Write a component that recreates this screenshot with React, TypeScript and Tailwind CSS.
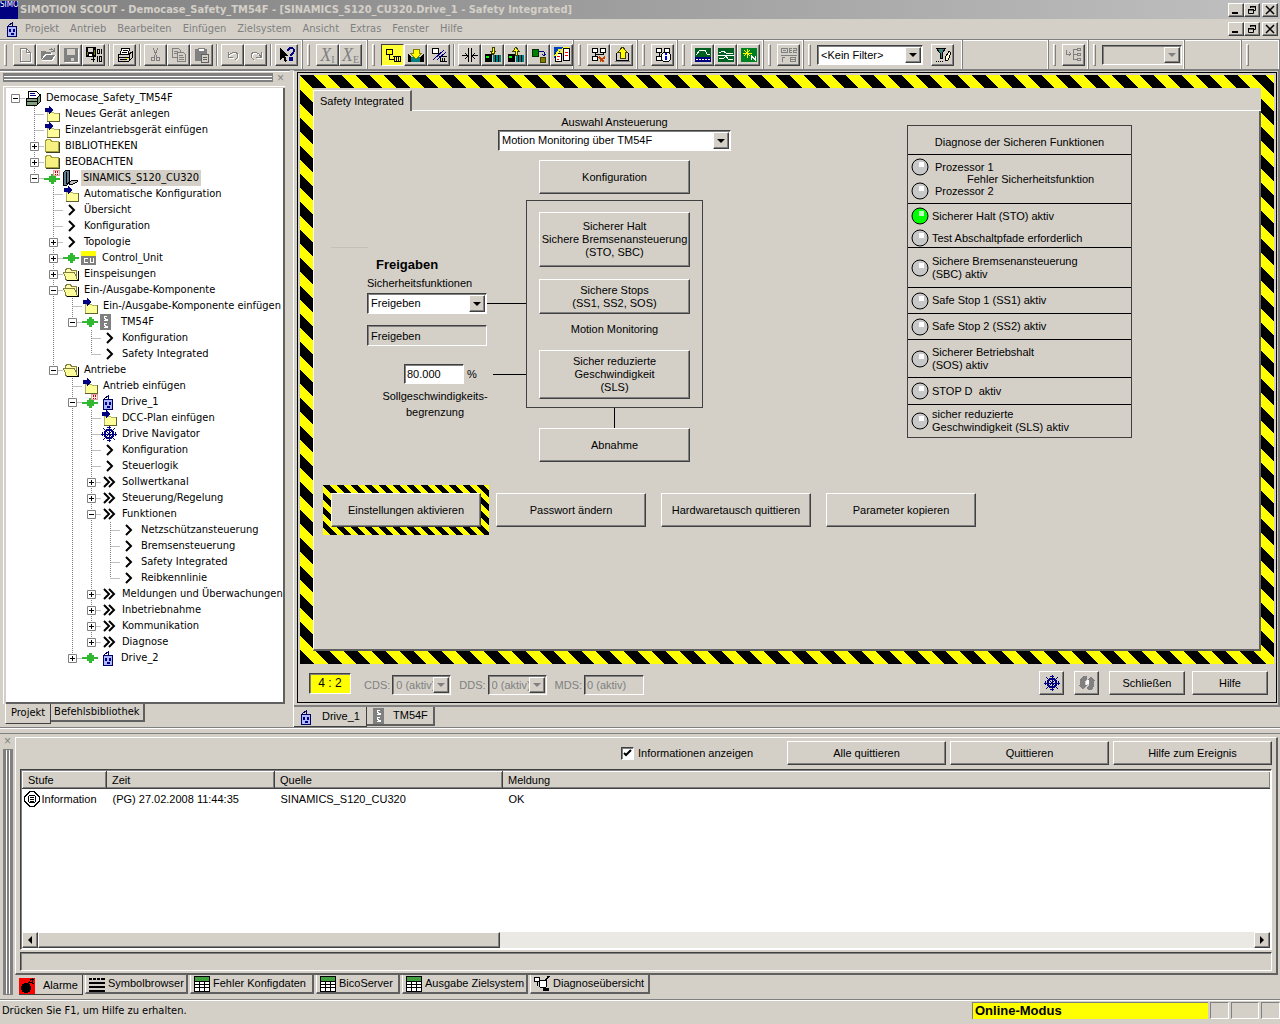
import type { ReactNode } from "react";
import clsx from "clsx";

const raised =
  "border border-t-white border-l-white border-r-[#404040] border-b-[#404040] shadow-[inset_-1px_-1px_0_#808080]";
const sunken =
  "border border-t-[#404040] border-l-[#404040] border-r-white border-b-white shadow-[inset_1px_1px_0_#808080]";
const hazard =
  "bg-[linear-gradient(45deg,#000_25%,#ff0_25%,#ff0_50%,#000_50%,#000_75%,#ff0_75%)]";
const tahoma = "font-['DejaVu_Sans_Condensed','DejaVu_Sans',sans-serif]";

const icons: Record<string, ReactNode> = {
  neu: (
    <g fill="none">
      <path d="M3.500 1.500h6l4 4v9h-10z M9.500 1.500v4h4" stroke="#fff" transform="translate(1 1)" />
      <path d="M3.500 1.500h6l4 4v9h-10z M9.500 1.500v4h4" stroke="#808080" />
    </g>
  ),
  open: (
    <>
      <path d="M2 5h4l1 1h5v2h4l-3 6H2z" fill="#fff" />
      <path d="M1 4h4l1 1h5v2H5l-4 6zM2 13l4-5h9l-3 5z" fill="#808080" />
      <path d="M9 3c2-2 3-1 5 1M14 1v3h-3" stroke="#808080" fill="none" />
    </>
  ),
  save: (
    <>
      <path d="M2 2h14v14H2z" fill="#fff" />
      <path d="M1 1h14v14H1z" fill="#808080" />
      <path d="M4 2h8v6H4zM8 11h3v3H8z" fill="#d4d0c8" />
    </>
  ),
  saveAll: (
    <>
      <path d="M0 0h10v10H0z" fill="#000" />
      <path d="M2 1h5v4H2z" fill="#d4d0c8" />
      <path d="M1 5h1v3H1zM8 3h1v5H8z" fill="#808000" />
      <path d="M3 7h3v2H3z" fill="#fff" />
      <path d="M11.500 2.500h2v4h-2zM15.500 2v5M5 12.500h4M7.500 10v5M11.500 9v6M13.500 9.500h2v5h-2z" stroke="#000" fill="none" />
    </>
  ),
  print: (
    <>
      <path d="M5 1h8l-2 6H3z" fill="#fff" stroke="#000" />
      <path d="M6 3.500h5M5 5.500h5" stroke="#000" />
      <path d="M1 7h11l3-2v6l-3 3H1z" fill="#d4d0c8" stroke="#000" />
      <path d="M1 10.500h11M12.500 7v7M3 12.500h7" stroke="#000" />
      <path d="M9 11h2v1H9z" fill="#ff0" />
    </>
  ),
  cut: (
    <g fill="none" stroke="#808080">
      <path d="M5 1l4 9M10 1l-4 9" />
      <circle cx="5" cy="12" r="2" />
      <circle cx="10" cy="12" r="2" />
    </g>
  ),
  copy: (
    <g fill="#d4d0c8" stroke="#808080">
      <path d="M1.500 1.500h6l2 2v7h-8zM3 4.500h4M3 6.500h4" />
      <path d="M6.500 5.500h6l2 2v7h-8zM8 8.500h4M8 10.500h5M8 12.500h5" />
    </g>
  ),
  paste: (
    <>
      <path d="M1 2h12v12H1z" fill="#808080" />
      <path d="M4 1h6v3H4z" fill="#fff" stroke="#808080" />
      <path d="M7.500 7.500h7v8h-7zM9 10.500h4M9 12.500h4" fill="#d4d0c8" stroke="#606060" />
    </>
  ),
  undo: (
    <g fill="none">
      <path d="M3 5v5h5M3 10c3-6 10-6 10-1 0 2-2 3-3 4" stroke="#fff" transform="translate(1 1)" />
      <path d="M3 5v5h5M3 10c3-6 10-6 10-1 0 2-2 3-3 4" stroke="#808080" />
    </g>
  ),
  redo: (
    <g fill="none">
      <path d="M13 5v5H8M13 10C10 4 3 4 3 9c0 2 2 3 3 4" stroke="#fff" transform="translate(1 1)" />
      <path d="M13 5v5H8M13 10C10 4 3 4 3 9c0 2 2 3 3 4" stroke="#808080" />
    </g>
  ),
  help: (
    <>
      <path d="M1 1v12l3-3 2 5 2-1-2-5h4z" fill="#000" />
      <path d="M9 4c0-4 6-4 6 0 0 2-3 2-3 5M11 11h2v2h-2z" fill="none" stroke="#000080" strokeWidth="2" />
    </>
  ),
  online: (
    <>
      <path d="M1.500 2.500h6v5h-6z" fill="#ff0" stroke="#000" />
      <path d="M4.500 8v4.500h4M8 9.500h8M9.500 10v5M11.500 10v5M13.500 10v5M15.500 10v5M9 14.500h7" stroke="#000" fill="none" />
    </>
  ),
  offline: (
    <>
      <path d="M1.500 1.500h6v5h-6z" fill="#fff" stroke="#000" />
      <path d="M8 9.500h8M9.500 11v4M11.500 11v4M13.500 11v4M9 14.500h7" stroke="#000" fill="none" />
      <path d="M2 13L13 3M6 13l9-8" stroke="#000080" fill="none" />
    </>
  ),
  load: (
    <>
      <path d="M0 7l3 3v5H0zM16 7l-4 3v5h4z" fill="#000" />
      <path d="M3 10h9v5H3z" fill="#008080" />
      <path d="M5 2h6v4h3l-6 6-6-6h3z" fill="#ff0" stroke="#808000" />
    </>
  ),
  split: (
    <>
      <path d="M6.500 1v14M9.500 1v14" stroke="#000" fill="none" />
      <path d="M0 8.500h5M3 6l3 3-3 3M16 8.500h-5M13 6l-3 3 3 3" stroke="#000" fill="none" />
    </>
  ),
  download: (
    <>
      <path d="M0 7h7v8H0z" fill="#000" />
      <path d="M1 9h3v2H1z" fill="#0f0" />
      <path d="M8 8h8v7H8z" fill="#008080" />
      <path d="M10.500 8v7M13.500 8v7" stroke="#000" />
      <path d="M7 0h2v4h2L8 8 5 4h2z" fill="#ff0" stroke="#404000" />
    </>
  ),
  upload: (
    <>
      <path d="M0 7h7v8H0z" fill="#000" />
      <path d="M1 9h3v2H1z" fill="#0f0" />
      <path d="M8 8h8v7H8z" fill="#008080" />
      <path d="M10.500 8v7M13.500 8v7" stroke="#000" />
      <path d="M8 0l3 4H9v4H7V4H5z" fill="#ff0" stroke="#404000" />
    </>
  ),
  ram: (
    <>
      <path d="M1 2h6v7H1z" fill="#008000" stroke="#003000" />
      <path d="M8 4l5 1M13 5v4M11 7l2 2 2-2" stroke="#000080" fill="none" />
      <circle cx="12" cy="13" r="3" fill="#808000" stroke="#404000" />
    </>
  ),
  compare: (
    <>
      <path d="M0 0h9L0 12z" fill="#0040c0" />
      <path d="M9 0h6L6 9z" fill="#ff0" />
      <path d="M1.500 6.500h6v8h-6zM9.500 1.500h6v12h-6z" fill="#fff" stroke="#000" />
      <path d="M11 5.500h3M11 8.500h3M3 9.500h3M3 12.500h2" stroke="#f00" />
      <path d="M1 9L6 2" stroke="#ff0" strokeWidth="2" />
    </>
  ),
  nodes: (
    <>
      <path d="M1.500 1.500h5v4h-5zM9.500 1.500h5v4h-5zM1.500 9.500h5v4h-5z" fill="#fff" stroke="#000" />
      <path d="M4.500 6v3M12.500 6v2M4 7.500h8" stroke="#000" />
      <path d="M8 10l5 5M9 14l5-4" stroke="#c04000" strokeWidth="2" />
    </>
  ),
  eject: (
    <>
      <path d="M2.500 6v7.500h12V6" fill="none" stroke="#000" />
      <path d="M1 14h15v1H1z" fill="#808080" />
      <path d="M8.500 0L13 5h-2v6H6V5H4z" fill="#ff0" stroke="#404000" />
    </>
  ),
  info: (
    <>
      <path d="M1.500 1.500h5v4h-5zM9.500 1.500h5v4h-5zM1.500 9.500h5v4h-5zM4.500 6v3" fill="#fff" stroke="#000" />
      <circle cx="11" cy="10" r="5" fill="#fff" stroke="#000" />
      <path d="M10 6h2v2h-2zM10 9h2v4h-2z" fill="#00f" />
    </>
  ),
  trace: (
    <>
      <path d="M0 1h16v9H0z" fill="#006020" />
      <path d="M0 10h16v5H0z" fill="#000080" />
      <path d="M1 8l4-5h5l2 4h3" stroke="#fff" fill="none" />
      <path d="M1 12.500h14" stroke="#fff" strokeDasharray="2 1" />
    </>
  ),
  trace2: (
    <>
      <path d="M0 1h16v14H0z" fill="#006020" />
      <path d="M1 6l4-2 3 2h7M1 11h5l2-2 3 4 4-1M0 8.500h16" stroke="#fff" fill="none" />
    </>
  ),
  trace3: (
    <>
      <path d="M0 1h16v14H0z" fill="#008020" />
      <path d="M6.500 2v9M2 6.500h9M3 3l6 6M9 3l-6 6" stroke="#ff0" />
      <path d="M10.500 13V9l4 4V9" stroke="#fff" fill="none" />
    </>
  ),
  e2: (
    <g stroke="#808080" fill="none">
      <path d="M.5 1.500h6v4h-6zM2 3.500h3M11 1.500H8.500v4H11M9 3.500h2M12 1.500h3.500v2h-3v2h3" />
      <path d="M0 8.500h16M1.500 10v5M1 10.500h3M9.500 10.500h5v4h-5zM9 12.500h5" />
    </g>
  ),
  filter: (
    <>
      <path d="M1 1h10L7 6v5H5V6z" fill="#408080" stroke="#000" />
      <path d="M14 4l-4 7v3l3-1 3-7z" fill="#ffc" stroke="#000" />
      <path d="M1 14.500h8" stroke="#000" strokeDasharray="1 1" />
    </>
  ),
  hierarchy: (
    <g stroke="#808080" fill="none">
      <path d="M.5 3v4.500h4M3 5l2 2-2 2M7.500 2v11M8 2.500h3M8 7.500h3M8 12.500h3" />
      <path d="M11.500 1.500h3v2h-3zM11.500 6.500h3v2h-3zM11.500 11.500h3v2h-3z" />
    </g>
  ),
  project: (
    <>
      <path d="M4 1h7l3 3v5H3z" fill="#fff" stroke="#000" />
      <path d="M5 3.500h5M5 5.500h6" stroke="#000080" />
      <path d="M1 8h11l3-3v7l-3 3H1z" fill="#80a080" stroke="#000" />
      <path d="M1 11.500h11M12.500 8v7" stroke="#000" />
    </>
  ),
  insert: (
    <>
      <path d="M3 6h6l1 1h5v8H3z" fill="#ffff99" stroke="#b0b060" />
      <path d="M15.500 7v8.500H3" fill="none" stroke="#606030" />
      <path d="M1 2h4V0l5 4-5 4V6H1z" fill="#000080" />
    </>
  ),
  folder: (
    <>
      <path d="M1.500 3.500l1-2h4l1 2h7v10h-13z" fill="#f5f080" stroke="#a0a040" />
      <path d="M15.500 4v10.500H2" fill="none" stroke="#404020" />
    </>
  ),
  folderOpen: (
    <>
      <path d="M2.500 13.500v-9l1-2h4l1 2h5v9z" fill="#fffcb0" stroke="#808040" />
      <path d="M.5 6.500h11l3 7.500h-11z" fill="#ffff99" stroke="#808040" />
      <path d="M15.500 5v9.500H4" fill="none" stroke="#000" />
    </>
  ),
  plug: <path d="M0 7h5V5h2V3h3v2h2v2h4v2h-4v2h-2v2H7v-2H5V9H0z" fill="#30b830" />,
  plugAlert: (
    <>
      <path d="M0 8h5V6h2V4h3v2h2v2h4v2h-4v2h-2v2H7v-2H5v-2H0z" fill="#30b830" />
      <path d="M9.500.5h6v5h-6z" fill="#ffe8e8" stroke="#e0a0a0" />
      <path d="M11 1h1v2h-1zM13 1h1v2h-1zM11 4h1v1h-1zM13 4h1v1h-1z" fill="#c00000" />
    </>
  ),
  sinamics: (
    <>
      <path d="M1 3l3-3h3v12l-2 3H1z" fill="#608090" stroke="#000" />
      <path d="M4.500 2v12" stroke="#000" />
      <path d="M7 13l3-3h5v2l-4 2H7z" fill="#c0c0c0" stroke="#000" />
    </>
  ),
  cu: (
    <>
      <path d="M0 1h15v5H0z" fill="#ff0" />
      <path d="M0 6h15v9H0z" fill="#808080" />
      <path d="M7 8.500H3.500v4H7M9.500 8v4.500h3V8" stroke="#fff" fill="none" />
    </>
  ),
  tm: (
    <>
      <path d="M0 0h11v16H0z" fill="#808080" />
      <path d="M7 2.500H4v2l3 1v1H4M7 9.500H4v2l3 1v1H4" stroke="#fff" fill="none" />
    </>
  ),
  drive: (
    <>
      <path d="M3.500 5.500h9v10h-9z" fill="#b0b8ff" stroke="#000060" />
      <path d="M4 5l4-3M8.500 1v4" stroke="#000060" />
      <path d="M5 8h2v3H5zM9 8h2v3H9zM7 12h3v2H7z" fill="#000080" />
    </>
  ),
  wheel: (
    <g fill="none" stroke="#000080">
      <circle cx="8" cy="8" r="4.500" strokeWidth="2" />
      <path d="M8.500 0v16M0 8.500h16M2 2l12 12M14 2L2 14" />
      <path d="M6 1.500h4M6 14.500h4M1.500 6v4M14.500 6v4" />
    </g>
  ),
  arrow: <path d="M6 3l5 5-5 5" fill="none" stroke="#000" strokeWidth="2" />,
  arrows: <path d="M3 3l5 5-5 5M8 3l5 5-5 5" fill="none" stroke="#000" strokeWidth="2" />,
  refresh: (
    <>
      <path d="M8 1H4L1 5v5H0l4 5 4-5H6V6l2-2zM9 15h4l2-4V6h1l-4-5-4 5h2v4l-2 2z" fill="#808080" />
      <path d="M7 10V6M8 9V5M9 9V5" stroke="#fff" fill="none" />
    </>
  ),
  message: (
    <g fill="none" stroke="#000">
      <path d="M6 .5h4L15.500 6v4L10 15.500H6L.5 10V6z" fill="#fff" />
      <circle cx="8" cy="8" r="4" />
      <path d="M6 6.500h4M6 8.500h4M6 10.500h4" />
    </g>
  ),
  bomb: (
    <>
      <path d="M0 0h16v16H0z" fill="#f00" />
      <circle cx="7" cy="10" r="5" />
      <path d="M9 6l3-4M11 1l4 1M11 4l4 2M13 0v5" stroke="#000" />
    </>
  ),
  symbols: (
    <path d="M0 3h3M4 3h3M8 3h3M12 3h4M0 7h16M0 11h16M0 15h16" stroke="#000" strokeWidth="2" />
  ),
  grid: (
    <>
      <path d="M.5.5h15v15H.5z" fill="#fff" stroke="#000" />
      <path d="M1 1h14v4H1z" fill="#40a040" />
      <path d="M0 5.500h16M0 8.500h16M0 11.500h16M5.500 5v11M10.500 5v11" stroke="#000" />
    </>
  ),
  overview: (
    <>
      <path d="M.5 1.500h5v4h-5zM3.500 6v4" fill="#fff" stroke="#000" />
      <circle cx="9" cy="8" r="4" fill="#fff" stroke="#000" />
      <path d="M11 5l4-5" stroke="#000" strokeWidth="2" />
      <path d="M9 12h6v3H9z" />
    </>
  ),
};

const Icon = ({ name }: { name: string }) => (
  <svg viewBox="0 0 16 16" className="size-4 shrink-0" shapeRendering={name.startsWith("arrow") ? "auto" : "crispEdges"} aria-hidden="true">
    {icons[name]}
  </svg>
);

type Node = {
  label: string;
  icon: string;
  state?: string;
  closed?: boolean;
  selected?: boolean;
  children?: Node[];
};

const tree: Node = {
  label: "Democase_Safety_TM54F",
  icon: "project",
  children: [
    { label: "Neues Gerät anlegen", icon: "insert" },
    { label: "Einzelantriebsgerät einfügen", icon: "insert" },
    { label: "BIBLIOTHEKEN", icon: "folder", closed: true },
    { label: "BEOBACHTEN", icon: "folder", closed: true },
    {
      label: "SINAMICS_S120_CU320",
      icon: "sinamics",
      state: "plugAlert",
      selected: true,
      children: [
        { label: "Automatische Konfiguration", icon: "insert" },
        { label: "Übersicht", icon: "arrow" },
        { label: "Konfiguration", icon: "arrow" },
        { label: "Topologie", icon: "arrow", closed: true },
        { label: "Control_Unit", icon: "cu", state: "plug", closed: true },
        { label: "Einspeisungen", icon: "folderOpen", closed: true },
        {
          label: "Ein-/Ausgabe-Komponente",
          icon: "folderOpen",
          children: [
            { label: "Ein-/Ausgabe-Komponente einfügen", icon: "insert" },
            {
              label: "TM54F",
              icon: "tm",
              state: "plug",
              children: [
                { label: "Konfiguration", icon: "arrow" },
                { label: "Safety Integrated", icon: "arrow" },
              ],
            },
          ],
        },
        {
          label: "Antriebe",
          icon: "folderOpen",
          children: [
            { label: "Antrieb einfügen", icon: "insert" },
            {
              label: "Drive_1",
              icon: "drive",
              state: "plugAlert",
              children: [
                { label: "DCC-Plan einfügen", icon: "insert" },
                { label: "Drive Navigator", icon: "wheel" },
                { label: "Konfiguration", icon: "arrow" },
                { label: "Steuerlogik", icon: "arrow" },
                { label: "Sollwertkanal", icon: "arrows", closed: true },
                { label: "Steuerung/Regelung", icon: "arrows", closed: true },
                {
                  label: "Funktionen",
                  icon: "arrows",
                  children: [
                    { label: "Netzschützansteuerung", icon: "arrow" },
                    { label: "Bremsensteuerung", icon: "arrow" },
                    { label: "Safety Integrated", icon: "arrow" },
                    { label: "Reibkennlinie", icon: "arrow" },
                  ],
                },
                { label: "Meldungen und Überwachungen", icon: "arrows", closed: true },
                { label: "Inbetriebnahme", icon: "arrows", closed: true },
                { label: "Kommunikation", icon: "arrows", closed: true },
                { label: "Diagnose", icon: "arrows", closed: true },
              ],
            },
            { label: "Drive_2", icon: "drive", state: "plug", closed: true },
          ],
        },
      ],
    },
  ],
};

const Guide = ({ d, box }: { d: string; box?: "plus" | "minus" }) => (
  <svg viewBox="0 0 19 16" className="h-4 w-[19px] shrink-0" aria-hidden="true">
    <path d={d} fill="none" stroke="#808080" strokeDasharray="1 1" />
    {box && <path d="M5.500 4.500h8v8h-8z" fill="#fff" stroke="#808080" />}
    {box && <path d={box === "plus" ? "M7 8.500h5M9.500 6v5" : "M7 8.500h5"} stroke="#000" />}
  </svg>
);

const TreeItem = ({ node, lines, last }: { node: Node; lines: boolean[]; last: boolean }) => {
  const root = lines.length === 0;
  const box = node.children ? "minus" : node.closed ? "plus" : undefined;
  const vertical = root ? "" : last ? "M9.500 0v8" : "M9.500 0v16";
  return (
    <li>
      <div className="flex h-4 items-center">
        {lines.slice(1).map((line, i) => (
          <Guide key={i} d={line ? "M9.500 0v16" : ""} />
        ))}
        <Guide d={`${vertical}M9.500 8.500h10`} box={box} />
        {node.state && (
          <span className="flex w-[18px] shrink-0">
            <Icon name={node.state} />
          </span>
        )}
        <span className="flex w-[19px] shrink-0">
          <Icon name={node.icon} />
        </span>
        <span className={clsx("px-0.5 leading-4 whitespace-nowrap", node.selected && "bg-[#d4d0c8]")}>
          {node.label}
        </span>
      </div>
      {node.children && (
        <ul>
          {node.children.map((child, i) => (
            <TreeItem
              key={child.label}
              node={child}
              lines={root ? [false, false] : [...lines, !last]}
              last={i === node.children!.length - 1}
            />
          ))}
        </ul>
      )}
    </li>
  );
};

const WindowButtons = () => (
  <div className="flex items-center">
    <button aria-label="Minimieren" className={clsx("flex h-3.5 w-4 items-end bg-[#d4d0c8] pb-0.5 pl-[3px]", raised)}>
      <span className="h-0.5 w-1.5 bg-black" />
    </button>
    <button aria-label="Wiederherstellen" className={clsx("flex h-3.5 w-4 items-center justify-center bg-[#d4d0c8]", raised)}>
      <svg viewBox="0 0 10 10" className="size-2.5" fill="none" stroke="#000">
        <path d="M3.500 3V1.500h5v4H7M3 1.500h6M1.500 4.500h5v4h-5zM1 4.500h6" />
        <path d="M1 5h6M3 2h6" />
      </svg>
    </button>
    <button aria-label="Schließen" className={clsx("ml-0.5 flex h-3.5 w-4 items-center justify-center bg-[#d4d0c8]", raised)}>
      <svg viewBox="0 0 10 10" className="size-2.5" fill="none" stroke="#000" strokeWidth="1.500">
        <path d="M1 1l8 8M9 1L1 9" />
      </svg>
    </button>
  </div>
);

const ToolGroup = ({ className, grip = true, children }: { className: string; grip?: boolean; children?: ReactNode }) => (
  <div className={clsx("flex h-full items-center border-r border-[#808080] shadow-[inset_-1px_0_0_#fff]", className)}>
    {grip && <span className="mr-1.5 ml-1 h-[22px] w-[3px] shrink-0 border border-t-white border-r-[#808080] border-b-[#808080] border-l-white" />}
    {children}
  </div>
);

const Tool = ({ icon, label, active }: { icon: string; label: string; active?: boolean }) => (
  <button
    aria-label={label}
    className={clsx(
      "flex h-[22px] w-[23px] shrink-0 items-center justify-center",
      active ? "border border-t-[#404040] border-r-white border-b-white border-l-[#404040] bg-[#ff3]" : raised,
    )}
  >
    <Icon name={icon} />
  </button>
);

const Sep = () => <span className="mx-[3px] h-[22px] w-0.5 shrink-0 border-l border-[#808080] bg-white" />;

const DropArrow = ({ disabled }: { disabled?: boolean }) => (
  <span className={clsx("flex w-4 shrink-0 items-center justify-center bg-[#d4d0c8]", raised)}>
    <svg viewBox="0 0 8 4" className="h-1 w-2" fill={disabled ? "#808080" : "#000"} aria-hidden="true">
      <path d="M0 0h8L4 4z" />
    </svg>
  </span>
);

type ComboProps = { id: string; value?: string; label: string; disabled?: boolean; className: string };

const Combo = ({ id, value, label, disabled, className }: ComboProps) => (
  <div className={clsx("flex shrink-0 p-px", sunken, disabled ? "bg-[#d4d0c8] text-[#808080]" : "bg-white", className)}>
    <select id={id} aria-label={label} disabled={disabled} className="min-w-0 flex-1 appearance-none bg-transparent pl-0.5 outline-none">
      <option>{value}</option>
    </select>
    <DropArrow disabled={disabled} />
  </div>
);

const PushButton = ({ className, children }: { className: string; children: ReactNode }) => (
  <button className={clsx("shrink-0 bg-[#d4d0c8] text-center leading-[13px]", raised, className)}>{children}</button>
);

const Lamp = ({ on }: { on?: boolean }) => (
  <svg viewBox="0 0 18 18" className="size-[18px] shrink-0" aria-hidden="true">
    <circle cx="9" cy="9" r="8" fill={on ? "#0f0" : "#c8c8c8"} stroke="#000" />
    <path d="M8 4h5v5H8z" fill={on ? "#c0ffc0" : "#fff"} />
  </svg>
);

const diagnosis = [
  { text: ["Sichere Bremsenansteuerung", "(SBC) aktiv"], height: "h-10" },
  { text: ["Safe Stop 1 (SS1) aktiv"], height: "h-[26px]" },
  { text: ["Safe Stop 2 (SS2) aktiv"], height: "h-[26px]" },
  { text: ["Sicherer Betriebshalt", "(SOS) aktiv"], height: "h-[38px]" },
  { text: ["STOP D  aktiv"], height: "h-[27px]" },
  { text: ["sicher reduzierte", "Geschwindigkeit (SLS) aktiv"], height: "h-[33px]" },
];

const Diagnosis = () => (
  <section className="w-[225px] shrink-0 border border-[#404040] leading-[13px]">
    <h2 className="flex h-7 items-center justify-center pt-1">Diagnose der Sicheren Funktionen</h2>
    <div className="flex h-[49px] flex-col border-t border-black pt-[3px] pl-[3px]">
      <div className="flex h-[18px] items-center gap-1.5">
        <Lamp />
        Prozessor 1
      </div>
      <span className="h-1.5 pl-14 leading-1.5">Fehler Sicherheitsfunktion</span>
      <div className="flex h-[18px] items-center gap-1.5">
        <Lamp />
        Prozessor 2
      </div>
    </div>
    <div className="flex h-11 flex-col justify-between border-t border-black pt-[3px] pl-[3px]">
      <div className="flex items-center gap-[3px]">
        <Lamp on />
        Sicherer Halt (STO) aktiv
      </div>
      <div className="flex items-center gap-[3px]">
        <Lamp />
        Test Abschaltpfade erforderlich
      </div>
    </div>
    {diagnosis.map(({ text, height }) => (
      <div key={text[0]} className={clsx("flex items-center gap-[3px] border-t border-black pl-[3px]", height)}>
        <Lamp />
        <span>
          {text.map((line) => (
            <span key={line} className="block whitespace-pre">
              {line}
            </span>
          ))}
        </span>
      </div>
    ))}
  </section>
);

const Releases = () => (
  <div className="w-[212px] pt-[136px]">
    <div className="ml-[17px] h-px w-[37px] bg-[#c4c0b8]" />
    <h2 className="pt-2 pl-[62px] text-[13px] leading-[18px] font-bold">Freigaben</h2>
    <label htmlFor="sicherheit" className="block pl-[53px] leading-[18px]">
      Sicherheitsfunktionen
    </label>
    <div className="flex items-center pt-px pl-[53px]">
      <Combo id="sicherheit" label="Sicherheitsfunktionen" value="Freigeben" className="h-[21px] w-[120px]" />
      <span className="h-px flex-1 bg-black" />
    </div>
    <div className="pt-[11px] pl-[53px]">
      <input aria-label="Status Freigabe" readOnly value="Freigeben" className={clsx("h-[21px] w-[120px] px-[3px]", sunken)} />
    </div>
    <div className="flex items-center pt-[18px] pl-[90px]">
      <input id="begrenzung" defaultValue="80.000" className={clsx("h-5 w-[60px] bg-white px-0.5", sunken)} />
      <span className="w-[29px] pl-[3px]">%</span>
      <span className="h-px flex-1 bg-black" />
    </div>
    <label htmlFor="begrenzung" className="block pt-1 pl-[30px] text-center leading-4">
      Sollgeschwindigkeits-
      <br />
      begrenzung
    </label>
  </div>
);

const Functions = () => (
  <div className="flex w-[177px] flex-col items-center pt-[3px]">
    <label htmlFor="ansteuerung" className="leading-4">
      Auswahl Ansteuerung
    </label>
    <Combo id="ansteuerung" label="Auswahl Ansteuerung" value="Motion Monitoring über TM54F" className="h-[21px] w-[233px]" />
    <PushButton className="mt-[9px] h-[34px] w-[151px]">Konfiguration</PushButton>
    <div className="mt-1.5 flex w-full flex-col items-center border border-[#404040] pt-[11px] pb-2">
      <PushButton className="h-[55px] w-[151px]">
        Sicherer Halt
        <br />
        <span className="whitespace-nowrap">Sichere Bremsenansteuerung</span>
        <br />
        (STO, SBC)
      </PushButton>
      <PushButton className="mt-3 h-[35px] w-[151px]">
        Sichere Stops
        <br />
        (SS1, SS2, SOS)
      </PushButton>
      <span className="pt-1.5 pb-3 leading-[18px]">Motion Monitoring</span>
      <PushButton className="h-[49px] w-[151px]">
        Sicher reduzierte
        <br />
        Geschwindigkeit
        <br />
        (SLS)
      </PushButton>
    </div>
    <span className="h-5 w-px bg-black" />
    <PushButton className="h-[34px] w-[151px]">Abnahme</PushButton>
  </div>
);

const ProjectPanel = () => (
  <aside className="flex w-[290px] shrink-0 flex-col border-t border-[#808080] pt-0.5 shadow-[inset_0_1px_0_#fff]">
    <div className="flex items-center gap-1 pl-[3px]">
      <div className="flex h-[9px] w-[270px] flex-col justify-center gap-0.5 bg-[#808080] px-px">
        <span className="h-px bg-white" />
        <span className="h-px bg-white" />
      </div>
      <button aria-label="Projektnavigator schließen" className="text-xs leading-2 text-[#808080]">
        ×
      </button>
    </div>
    <div className="mt-1 mr-[5px] ml-[3px] flex flex-1 flex-col border-t border-l border-white pt-px pl-0.5">
      <div className="flex-1 border-r-2 border-b-2 border-[#606060] bg-white pt-0.5 pr-1">
        <ul className={tahoma}>
          <TreeItem node={tree} lines={[]} last />
        </ul>
      </div>
    </div>
    <div role="tablist" className={clsx("flex h-[23px] items-start pl-[5px]", tahoma)}>
      <button role="tab" aria-selected="true" className="h-5 border-r border-b border-l border-[#404040] border-l-white px-[5px]">
        Projekt
      </button>
      <button role="tab" aria-selected="false" className="h-[18px] border-r-2 border-b-2 border-[#606060] px-[3px] leading-4">
        Befehlsbibliothek
      </button>
    </div>
  </aside>
);

const actions = ["Passwort ändern", "Hardwaretausch quittieren", "Parameter kopieren"];

const SafetyPage = () => (
  <div className="flex min-w-0 flex-1 flex-col bg-[#d4d0c8] pt-0.5">
    <div role="tablist" className="flex h-[21px]">
      <button role="tab" aria-selected="true" className="border-t border-r-2 border-l border-t-white border-r-[#606060] border-l-white px-1.5 whitespace-nowrap">
        Safety Integrated
      </button>
      <span className="flex-1 border-b border-white" />
    </div>
    <div className="flex flex-1 flex-col border-r-2 border-b-2 border-l border-[#606060] border-l-white">
      <div className="flex">
        <Releases />
        <Functions />
        <div className="ml-[204px] pt-3.5">
          <Diagnosis />
        </div>
      </div>
      <div className="flex items-center gap-[15px] pt-[23px] pl-[9px]">
        <div className={clsx("-mr-2 flex p-2 bg-size-[14px_14px]", hazard)}>
          <PushButton className="h-[34px] w-[150px]">Einstellungen aktivieren</PushButton>
        </div>
        {actions.map((label) => (
          <PushButton key={label} className="h-[34px] w-[150px]">
            {label}
          </PushButton>
        ))}
      </div>
    </div>
  </div>
);

const Workspace = () => (
  <main className="flex min-w-0 flex-1 flex-col border-t border-l border-t-[#808080] border-l-white">
    <div className="flex flex-1 flex-col border-r-2 border-b-2 border-[#808080] pt-px pr-px pb-0.5 pl-[3px]">
      <div className="flex flex-1 flex-col border border-black">
        <div className={clsx("mx-0.5 mt-0.5 flex flex-1 p-[13px] bg-size-[28px_28px]", hazard)}>
          <SafetyPage />
        </div>
        <div className="flex h-[38px] items-center pr-2 pl-[11px]">
          <output className={clsx("h-[21px] w-[42px] bg-[#ff0] text-center text-xs leading-[19px]", sunken)}>4 : 2</output>
          <label htmlFor="cds" className="pt-1 pr-0.5 pl-[13px] text-[#808080]">
            CDS:
          </label>
          <Combo id="cds" label="CDS" value="0 (aktiv)" disabled className="mt-1 h-5 w-[59px]" />
          <label htmlFor="dds" className="pt-1 pr-0.5 pl-2 text-[#808080]">
            DDS:
          </label>
          <Combo id="dds" label="DDS" value="0 (aktiv)" disabled className="mt-1 h-5 w-[59px]" />
          <label htmlFor="mds" className="pt-1 pr-0.5 pl-2 text-[#808080]">
            MDS:
          </label>
          <input id="mds" disabled defaultValue="0 (aktiv)" className={clsx("mt-1 h-5 w-[60px] px-0.5 text-[#808080]", sunken)} />
          <button aria-label="Drive Navigator" className={clsx("ml-auto flex h-6 w-[25px] items-center justify-center", raised)}>
            <Icon name="wheel" />
          </button>
          <button aria-label="Aktualisieren" className={clsx("mx-2.5 flex h-6 w-[25px] items-center justify-center", raised)}>
            <Icon name="refresh" />
          </button>
          <PushButton className="h-6 w-[76px]">Schließen</PushButton>
          <PushButton className="ml-[7px] h-6 w-[76px]">Hilfe</PushButton>
        </div>
      </div>
    </div>
    <div role="tablist" className="flex h-5 items-start">
      <button role="tab" aria-selected="true" className="flex h-5 w-[73px] items-center gap-2 border-r border-b border-[#404040] pl-1">
        <Icon name="drive" /> Drive_1
      </button>
      <button role="tab" aria-selected="false" className="flex h-[19px] w-[68px] items-center gap-1 border-r-2 border-b-2 border-[#606060] pl-1.5">
        <Icon name="tm" /> TM54F
      </button>
    </div>
  </main>
);

const columns = ["Stufe", "Zeit", "Quelle", "Meldung"];

const outputTabs = [
  { label: "Symbolbrowser", icon: "symbols", width: "w-[103px]" },
  { label: "Fehler Konfigdaten", icon: "grid", width: "w-[124px]" },
  { label: "BicoServer", icon: "grid", width: "w-[84px]" },
  { label: "Ausgabe Zielsystem", icon: "grid", width: "w-[126px]" },
  { label: "Diagnoseübersicht", icon: "overview", width: "w-[120px]" },
];

const OutputPanel = () => (
  <section className="flex h-[271px] shrink-0 border-t border-white pt-1 shadow-[inset_0_4px_0_#d4d0c8,inset_0_5px_0_#808080]">
    <div className="flex w-[15px] shrink-0 flex-col items-center pb-1">
      <button aria-label="Meldefenster schließen" className="pt-1 text-xs leading-2 text-[#808080]">
        ×
      </button>
      <div className="mt-1 flex w-2.5 flex-1 justify-center gap-0.5 bg-[#808080] py-px">
        <span className="w-px bg-white" />
        <span className="w-px bg-white" />
      </div>
    </div>
    <div className="flex min-w-0 flex-1 flex-col pt-1 pr-0.5">
      <div className="flex min-h-0 flex-1 flex-col border-t border-r-2 border-b-2 border-l border-t-white border-r-[#606060] border-b-[#606060] border-l-white pt-[3px] pr-1 pb-0.5 pl-1">
        <div className="flex items-center justify-end gap-1 pb-1">
          <label className="flex items-center gap-1 pr-[30px]">
            <span className="grid">
              <input type="checkbox" defaultChecked className={clsx("peer col-start-1 row-start-1 size-[13px] appearance-none bg-white", sunken)} />
              <svg viewBox="0 0 13 13" className="pointer-events-none invisible col-start-1 row-start-1 size-[13px] peer-checked:visible" aria-hidden="true">
                <path d="M3 6l2 2 5-5" fill="none" stroke="#000" strokeWidth="2" />
              </svg>
            </span>
            Informationen anzeigen
          </label>
          <PushButton className="h-6 w-[159px]">Alle quittieren</PushButton>
          <PushButton className="h-6 w-[159px]">Quittieren</PushButton>
          <PushButton className="h-6 w-[159px]">Hilfe zum Ereignis</PushButton>
        </div>
        <div className={clsx("flex min-h-0 flex-1 flex-col bg-white p-px", sunken)}>
          <div className="min-h-0 flex-1">
            <table className="w-full table-fixed border-collapse text-left">
              <colgroup>
                <col className="w-[84px]" />
                <col className="w-[168px]" />
                <col className="w-[228px]" />
                <col />
              </colgroup>
              <thead>
                <tr className="h-[17px] bg-[#d4d0c8]">
                  {columns.map((column) => (
                    <th key={column} className={clsx("py-0 pl-[5px] leading-4 font-normal last:border-r-0", raised)}>
                      {column}
                    </th>
                  ))}
                </tr>
              </thead>
              <tbody>
                <tr className="h-5">
                  <td className="pl-px">
                    <span className="flex items-center gap-0.5">
                      <Icon name="message" /> Information
                    </span>
                  </td>
                  <td className="pl-1.5">(PG) 27.02.2008 11:44:35</td>
                  <td className="pl-1.5">SINAMICS_S120_CU320</td>
                  <td className="pl-1.5">OK</td>
                </tr>
              </tbody>
            </table>
          </div>
          <div className="flex h-4 bg-[#ebe9e4]">
            <button aria-label="Nach links" className={clsx("flex w-4 items-center justify-center bg-[#d4d0c8]", raised)}>
              <svg viewBox="0 0 4 8" className="h-2 w-1">
                <path d="M4 0v8L0 4z" />
              </svg>
            </button>
            <div className={clsx("w-[37%] bg-[#d4d0c8]", raised)} />
            <button aria-label="Nach rechts" className={clsx("ml-auto flex w-4 items-center justify-center bg-[#d4d0c8]", raised)}>
              <svg viewBox="0 0 4 8" className="h-2 w-1">
                <path d="M0 0v8l4-4z" />
              </svg>
            </button>
          </div>
        </div>
        <div className={clsx("mt-0.5 h-[19px] shrink-0", sunken)} />
      </div>
      <div role="tablist" className="flex h-6 items-start gap-0.5 pl-1">
        <button role="tab" aria-selected="true" className="flex h-5 w-16 items-center gap-2 border-r border-b border-[#404040] pt-0.5">
          <Icon name="bomb" /> Alarme
        </button>
        {outputTabs.map(({ label, icon, width }) => (
          <button
            key={label}
            role="tab"
            aria-selected="false"
            className={clsx("flex h-[19px] items-center gap-[3px] border-r-2 border-b-2 border-l border-[#606060] border-l-white pl-[3px] whitespace-nowrap", width)}
          >
            <Icon name={icon} /> {label}
          </button>
        ))}
      </div>
    </div>
  </section>
);

const menus = ["Projekt", "Antrieb", "Bearbeiten", "Einfügen", "Zielsystem", "Ansicht", "Extras", "Fenster", "Hilfe"];

export default function App() {
  return (
    <div className="flex min-h-screen flex-col bg-[#d4d0c8] font-['Liberation_Sans',Arial,sans-serif] text-[11px] text-black">
      <header className={tahoma}>
        <div className="flex h-[19px] items-center gap-0.5 bg-linear-to-r from-[#808080] to-[#c0c0c0] pr-0.5">
          <span className="flex size-[18px] shrink-0 overflow-hidden bg-[#000080] text-[8px] leading-2 text-white">SIMO</span>
          <h1 className="flex-1 pt-px font-bold whitespace-nowrap text-[#d4d0c8]">
            SIMOTION SCOUT - Democase_Safety_TM54F - [SINAMICS_S120_CU320.Drive_1 - Safety Integrated]
          </h1>
          <WindowButtons />
        </div>
        <div className="flex h-5 items-center pr-0.5 pl-1">
          <Icon name="drive" />
          <nav className="flex flex-1 gap-[11px] pl-[5px] text-[#808080]">
            {menus.map((menu) => (
              <button key={menu}>{menu}</button>
            ))}
          </nav>
          <WindowButtons />
        </div>
      </header>
      <div className="flex h-[31px] border-t border-b border-t-[#808080] border-b-[#808080] shadow-[inset_0_1px_0_#fff]">
        <ToolGroup className="w-[303px]">
          <Tool icon="neu" label="Neu" />
          <Tool icon="open" label="Öffnen" />
          <Tool icon="save" label="Speichern" />
          <Tool icon="saveAll" label="Speichern und übersetzen" />
          <Sep />
          <Tool icon="print" label="Drucken" />
          <Sep />
          <Tool icon="cut" label="Ausschneiden" />
          <Tool icon="copy" label="Kopieren" />
          <Tool icon="paste" label="Einfügen" />
          <Sep />
          <Tool icon="undo" label="Rückgängig" />
          <Tool icon="redo" label="Wiederholen" />
          <Sep />
          <Tool icon="help" label="Direkthilfe" />
        </ToolGroup>
        <ToolGroup className="w-[65px]">
          {["I", "E"].map((index) => (
            <button
              key={index}
              className={clsx("flex h-[22px] w-[23px] shrink-0 items-baseline justify-center font-['Liberation_Serif',serif] text-lg leading-5 text-[#808080]", raised)}
            >
              <i>X</i>
              <sub className="text-[10px] leading-none">{index}</sub>
            </button>
          ))}
        </ToolGroup>
        <ToolGroup className="w-[206px]">
          <Tool icon="online" label="Mit Zielsystem verbinden" active />
          <Tool icon="load" label="Projekt laden" />
          <Tool icon="offline" label="Verbindung trennen" />
          <Sep />
          <Tool icon="split" label="Abgleich" />
          <Tool icon="download" label="Laden in Zielgerät" />
          <Tool icon="upload" label="Laden in PG" />
          <Tool icon="ram" label="RAM nach ROM kopieren" />
          <Tool icon="compare" label="Vergleichen" />
        </ToolGroup>
        <ToolGroup className="w-16">
          <Tool icon="nodes" label="Erreichbare Teilnehmer" />
          <Tool icon="eject" label="Konfiguration laden" />
        </ToolGroup>
        <ToolGroup className="w-10">
          <Tool icon="info" label="Gerätediagnose" />
        </ToolGroup>
        <ToolGroup className="w-[86px]">
          <Tool icon="trace" label="Trace" />
          <Tool icon="trace2" label="Messfunktionen" />
          <Tool icon="trace3" label="Automatischer Reglerabgleich" />
        </ToolGroup>
        <ToolGroup className="w-10">
          <Tool icon="e2" label="Expertenliste" />
        </ToolGroup>
        <ToolGroup className="w-[159px]">
          <Combo id="filter" label="Filter" value="<Kein Filter>" className="mr-2 h-5 w-[106px]" />
          <Tool icon="filter" label="Filter bearbeiten" />
        </ToolGroup>
        <ToolGroup className="min-w-0 flex-1" grip={false} />
        <ToolGroup className="w-10">
          <Tool icon="hierarchy" label="Struktur" />
        </ToolGroup>
        <ToolGroup className="w-24">
          <Combo id="ziel" label="Ziel" disabled className="h-5 w-20" />
        </ToolGroup>
        <ToolGroup className="w-[57px]" grip={false} />
        <ToolGroup className="w-[38px]" />
      </div>
      <div className="flex flex-1 gap-[3px] border-b border-[#808080]">
        <ProjectPanel />
        <Workspace />
      </div>
      <OutputPanel />
      <footer className={clsx("flex h-[25px] items-start gap-0.5 border-t border-[#808080] pb-1 shadow-[inset_0_1px_0_#fff]", tahoma)}>
        <p className="h-5 flex-1 pt-0.5 pl-0.5 leading-[18px]">Drücken Sie F1, um Hilfe zu erhalten.</p>
        <strong className="mt-0.5 h-[17px] w-[236px] border-t border-l border-[#808080] bg-[#ff0] pl-0.5 font-['Liberation_Sans',Arial,sans-serif] text-[13px] leading-4">
          Online-Modus
        </strong>
        <span className="mt-0.5 h-[17px] w-[19px] border border-t-[#808080] border-r-white border-b-white border-l-[#808080]" />
        <span className="mt-0.5 h-[17px] w-7 border border-t-[#808080] border-r-white border-b-white border-l-[#808080]" />
        <span className="mt-0.5 h-[17px] w-[19px] border border-t-[#808080] border-r-white border-b-white border-l-[#808080]" />
      </footer>
    </div>
  );
}
